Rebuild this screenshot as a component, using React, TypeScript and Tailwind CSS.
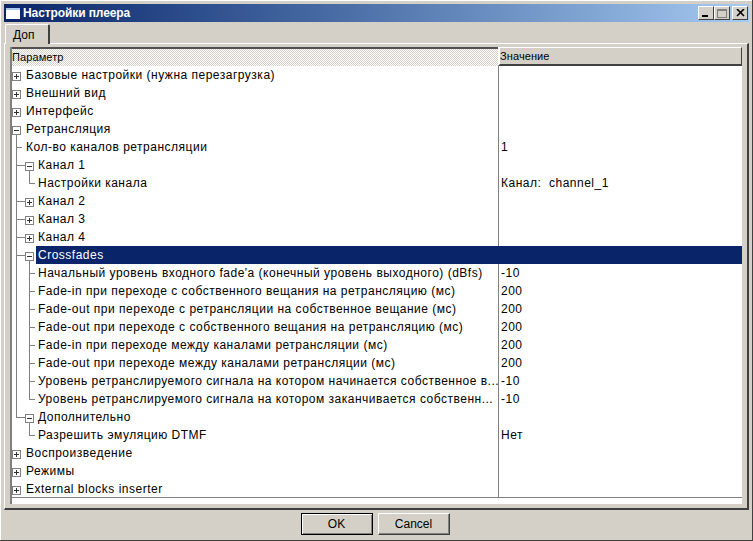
import React from 'react';

type Row = {
  text: string;
  value?: string;
  kind: 'root' | 'leaf1' | 'branch' | 'leaf2';
  box?: 'plus' | 'minus';
  last?: boolean;
  outerGone?: boolean;
  selected?: boolean;
};

const rows: Row[] = [
  { text: 'Базовые настройки (нужна перезагрузка)', kind: 'root', box: 'plus' },
  { text: 'Внешний вид', kind: 'root', box: 'plus' },
  { text: 'Интерфейс', kind: 'root', box: 'plus' },
  { text: 'Ретрансляция', kind: 'root', box: 'minus' },
  { text: 'Кол-во каналов ретрансляции', value: '1', kind: 'leaf1' },
  { text: 'Канал 1', kind: 'branch', box: 'minus' },
  { text: 'Настройки канала', value: 'Канал:  channel_1', kind: 'leaf2', last: true },
  { text: 'Канал 2', kind: 'branch', box: 'plus' },
  { text: 'Канал 3', kind: 'branch', box: 'plus' },
  { text: 'Канал 4', kind: 'branch', box: 'plus' },
  { text: 'Crossfades', kind: 'branch', box: 'minus', selected: true },
  { text: "Начальный уровень входного fade'а (конечный уровень выходного) (dBfs)", value: '-10', kind: 'leaf2' },
  { text: 'Fade-in при переходе с собственного вещания на ретрансляцию (мс)', value: '200', kind: 'leaf2' },
  { text: 'Fade-out при переходе с ретрансляции на собственное вещание (мс)', value: '200', kind: 'leaf2' },
  { text: 'Fade-out при переходе с собственного вещания на ретрансляцию (мс)', value: '200', kind: 'leaf2' },
  { text: 'Fade-in при переходе между каналами ретрансляции (мс)', value: '200', kind: 'leaf2' },
  { text: 'Fade-out при переходе между каналами ретрансляции (мс)', value: '200', kind: 'leaf2' },
  { text: 'Уровень ретранслируемого сигнала на котором начинается собственное в...', value: '-10', kind: 'leaf2' },
  { text: 'Уровень ретранслируемого сигнала на котором заканчивается собственн...', value: '-10', kind: 'leaf2', last: true },
  { text: 'Дополнительно', kind: 'branch', box: 'minus', last: true },
  { text: 'Разрешить эмуляцию DTMF', value: 'Нет', kind: 'leaf2', last: true, outerGone: true },
  { text: 'Воспроизведение', kind: 'root', box: 'plus' },
  { text: 'Режимы', kind: 'root', box: 'plus' },
  { text: 'External blocks inserter', kind: 'root', box: 'plus' },
];

const LINE = '#808080';

// box is 9x9, cx is the pixel column of its centre
const Expander = ({ cx, type }: { cx: number; type: 'plus' | 'minus' }) => (
  <g shapeRendering="crispEdges">
    <rect x={cx - 4} y={6} width={8} height={8} fill="#fff" stroke={LINE} transform="translate(0.5 0.5)" />
    <rect x={cx - 2} y={10} width={5} height={1} fill="#303030" />
    {type === 'plus' && <rect x={cx} y={8} width={1} height={5} fill="#303030" />}
  </g>
);

const Gutter = ({ row }: { row: Row }) => {
  const wide = row.kind === 'branch' || row.kind === 'leaf2';
  const X1 = 4; // x=16 on the page
  const X2 = 17; // x=29 on the page
  return (
    <svg width={wide ? 24 : 12} height={18} className="shrink-0" shapeRendering="crispEdges">
      {row.kind === 'root' && row.box && <Expander cx={X1} type={row.box} />}
      {row.kind === 'root' && row.box === 'minus' && <rect x={X1} y={15} width={1} height={3} fill={LINE} />}
      {row.kind === 'leaf1' && (
        <>
          <rect x={X1} y={0} width={1} height={18} fill={LINE} />
          <rect x={X1} y={9} width={6} height={1} fill={LINE} />
        </>
      )}
      {row.kind === 'branch' && (
        <>
          <rect x={X1} y={0} width={1} height={row.last ? 10 : 18} fill={LINE} />
          <rect x={X1} y={9} width={9} height={1} fill={LINE} />
          {row.box === 'minus' && <rect x={X2} y={15} width={1} height={3} fill={LINE} />}
          {row.box && <Expander cx={X2} type={row.box} />}
        </>
      )}
      {row.kind === 'leaf2' && (
        <>
          {!row.outerGone && <rect x={X1} y={0} width={1} height={18} fill={LINE} />}
          <rect x={X2} y={0} width={1} height={row.last ? 10 : 18} fill={LINE} />
          <rect x={X2} y={9} width={6} height={1} fill={LINE} />
        </>
      )}
    </svg>
  );
};

const TreeRow = ({ row }: { row: Row }) => (
  <div className="flex h-[18px] text-[12px] leading-[18px] tracking-[0.5px]">
    <div className="flex w-[486px] shrink-0 bg-white">
      <Gutter row={row} />
      <div className={`flex-1 pl-[2px] whitespace-nowrap ${row.selected ? 'bg-[#0a246a] text-white' : 'text-black'}`}>{row.text}</div>
    </div>
    <div className={`flex-1 pl-[2px] whitespace-pre ${row.selected ? 'bg-[#0a246a]' : 'border-l border-[#808080]'}`}>{row.value}</div>
  </div>
);

const CaptionButton = ({ children }: { children: React.ReactNode }) => (
  <div className="flex h-[14px] w-[16px] items-center justify-center border border-t-white border-l-white border-r-[#404040] border-b-[#404040] bg-[#d4d0c8]">
    {children}
  </div>
);

const DialogButton = ({ label, primary }: { label: string; primary?: boolean }) => (
  <button
    className={`h-[22px] w-[72px] bg-[#d4d0c8] text-[12px] text-black ${
      primary
        ? 'border border-black shadow-[inset_1px_1px_0_#fff,inset_-1px_-1px_0_#808080]'
        : 'border border-t-white border-l-white border-r-[#404040] border-b-[#404040] shadow-[inset_-1px_-1px_0_#808080]'
    }`}
  >
    {label}
  </button>
);

export default function App() {
  return (
    <div className="flex h-[541px] w-[753px] flex-col overflow-hidden border-r border-b border-[#404040] bg-[#d4d0c8] pt-[4px] pr-[3px] pl-[4px] font-['Liberation_Sans',sans-serif] shadow-[inset_1px_1px_0_#fff]">
      {/* title bar */}
      <div className="flex h-[18px] shrink-0 items-center bg-gradient-to-r from-[#0a246a] to-[#a6caf0] pr-[1px] pl-[2px]">
        <div className="h-[11px] w-[14px] border-t-2 border-[#a6caf0] bg-white" />
        <span className="ml-[3px] text-[12px] font-bold tracking-[-0.1px] text-white">Настройки плеера</span>
        <div className="ml-auto flex items-center gap-0">
          <CaptionButton>
            <svg width="8" height="8" className="block">
              <rect x="0" y="6" width="6" height="2" fill="#000" />
            </svg>
          </CaptionButton>
          <CaptionButton>
            <svg width="10" height="9" className="block">
              <rect x="0.5" y="0.5" width="9" height="8" fill="none" stroke="#808080" />
              <rect x="0" y="0" width="10" height="2" fill="#808080" />
            </svg>
          </CaptionButton>
          <div className="w-[2px]" />
          <CaptionButton>
            <svg width="9" height="8" className="block">
              <path d="M1 0 L8 7 M8 0 L1 7" stroke="#000" strokeWidth="1.6" />
            </svg>
          </CaptionButton>
        </div>
      </div>

      {/* tab strip */}
      <div className="flex h-[21px] shrink-0 items-end">
        <div className="relative z-10 -mb-px ml-[1px] flex h-[20px] w-[45px] items-center rounded-t-[2px] border-t border-l border-r-2 border-t-white border-l-white border-r-[#404040] bg-[#d4d0c8] pl-[7px] text-[12px] text-black">
          Доп
        </div>
      </div>

      {/* panel */}
      <div className="flex h-[467px] shrink-0 flex-col border-t border-l border-r-2 border-b-2 border-t-white border-l-white border-r-[#404040] border-b-[#404040] pt-[3px] pr-[5px] pl-[5px]">
        <div className="flex h-[457px] flex-col border-l-2 border-[#808080] bg-white">
          {/* header */}
          <div className="flex h-[19px] shrink-0 text-[11px] leading-[17px] tracking-[0.1px] text-black">
            <div className="w-[486px] shrink-0 border-t-2 border-[#505050] bg-[repeating-conic-gradient(#d4d0c8_0_25%,#fff_0_50%)] bg-[length:2px_2px]">
              Параметр
            </div>
            <div className="flex-1 border-t border-r border-b-2 border-l-2 border-t-white border-r-[#404040] border-b-[#404040] border-l-white bg-[#d4d0c8]">
              Значение
            </div>
          </div>
          {/* tree */}
          <div className="shrink-0">
            {rows.map(row => (
              <TreeRow key={row.text} row={row} />
            ))}
          </div>
          <div className="mt-[-1px] h-px w-full shrink-0 bg-[#808080]" />
        </div>
      </div>

      {/* buttons */}
      <div className="flex flex-1 justify-center gap-[5px] pt-[3px] pr-[3px]">
        <DialogButton label="OK" primary />
        <DialogButton label="Cancel" />
      </div>
    </div>
  );
}
